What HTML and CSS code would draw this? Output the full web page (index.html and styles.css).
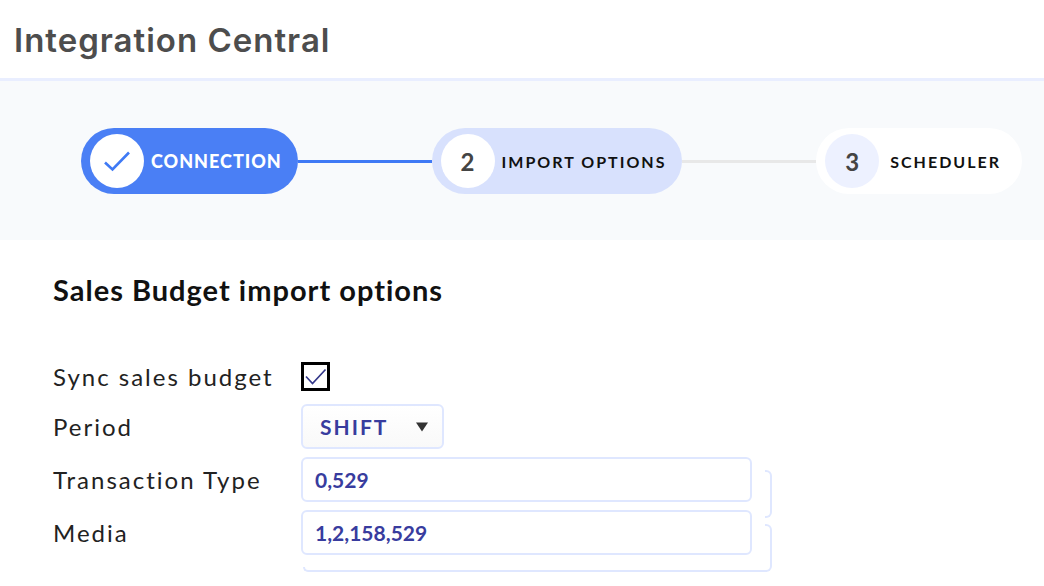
FILE: index.html
```html
<!DOCTYPE html>
<html lang="en">
<head>
<meta charset="utf-8">
<meta name="viewport" content="width=device-width, initial-scale=1">
<title>Integration Central</title>
<link rel="stylesheet" href="styles.css">
</head>
<body>
<header class="header">
  <h1 class="title">Integration Central</h1>
</header>
<nav class="stepper" aria-label="Progress">
  <div class="step step-done">
    <span class="badge">
      <svg width="28" height="22" viewBox="0 0 28 22" fill="none" stroke="currentColor" stroke-width="2.6" aria-hidden="true"><path d="M2 12.500L9.500 19.500L26 2.500"/></svg>
    </span>
    <span class="step-name">CONNECTION</span>
  </div>
  <span class="line line-done"></span>
  <div class="step step-current" aria-current="step">
    <span class="badge">2</span>
    <span class="step-name">IMPORT OPTIONS</span>
  </div>
  <span class="line"></span>
  <div class="step step-next">
    <span class="badge">3</span>
    <span class="step-name">SCHEDULER</span>
  </div>
</nav>
<main class="content">
  <h2 class="subtitle">Sales Budget import options</h2>
  <form class="form">
    <label class="label" for="sync">Sync sales budget</label>
    <span class="check">
      <input class="check-box" type="checkbox" id="sync" checked>
      <svg class="check-mark" width="22" height="18" viewBox="0 0 22 18" fill="none" stroke="currentColor" stroke-width="1.7" aria-hidden="true"><path d="M1 8.500L7.500 15.500L20.500 1.500"/></svg>
    </span>
    <label class="label" for="period">Period</label>
    <span class="select">
      <select class="select-box" id="period"><option>SHIFT</option></select>
      <svg class="arrow" width="12" height="10" viewBox="0 0 12 10" fill="currentColor" aria-hidden="true"><path d="M0 0.500H12L6 9.500Z"/></svg>
    </span>
    <label class="label" for="type">Transaction Type</label>
    <span class="field field-upper"><input class="text-box" type="text" id="type" value="0,529"></span>
    <label class="label" for="media">Media</label>
    <span class="field field-lower"><input class="text-box" type="text" id="media" value="1,2,158,529"></span>
  </form>
</main>
</body>
</html>
```

FILE: styles.css
```css
*,
*::before,
*::after {
  box-sizing: border-box;
}

body {
  margin: 0;
  background: #fff;
  color: #111;
  font-family: Lato, "Liberation Sans", sans-serif;
}

.header {
  padding: 20px 14px 18px;
  border-bottom: 3px solid #e9eeff;
}

.title {
  margin: 0;
  color: #4d4d4d;
  font: 600 33px/40px Inter, "Liberation Sans", sans-serif;
  letter-spacing: 1px;
}

.stepper {
  display: flex;
  align-items: center;
  padding: 47px 22px 46px 81px;
  background: #f8fafc;
}

.step {
  display: flex;
  align-items: center;
  gap: 7px;
  padding: 6px 16px 6px 9px;
  border-radius: 33px;
  font-size: 16px;
  font-weight: 700;
  letter-spacing: 2px;
  white-space: nowrap;
}

.badge {
  display: flex;
  align-items: center;
  justify-content: center;
  width: 54px;
  height: 54px;
  border-radius: 50%;
  background: #fff;
  color: #444;
  font-size: 24px;
  letter-spacing: 0;
}

.step-done {
  background: #4a7ff5;
  color: #fff;
  font-size: 18px;
  font-weight: 900;
  letter-spacing: 1px;
}

.step-done .badge {
  color: #3f7af5;
}

.step-current {
  background: #d8e1fd;
}

.step-next {
  gap: 11px;
  padding-right: 21px;
  background: #fff;
}

.step-next .badge {
  background: #edf1ff;
}

.line {
  flex: 1;
  height: 3px;
  background: #e8e8e8;
}

.line-done {
  background: #3f79f5;
}

.content {
  padding: 32px 53px;
}

.subtitle {
  margin: 0 0 49px;
  font-size: 29px;
  line-height: 36px;
  font-weight: 700;
  letter-spacing: 1px;
}

.form {
  display: grid;
  grid-template-columns: 240px minmax(0, 451px);
  grid-template-rows: 39px;
  grid-auto-rows: 45px;
  align-items: center;
  gap: 8px;
}

.label {
  color: #222;
  font-size: 24px;
  line-height: 30px;
  letter-spacing: 2px;
}

.check {
  display: grid;
  place-items: center;
  justify-self: start;
}

.check-box {
  grid-area: 1 / 1;
  width: 29px;
  height: 29px;
  margin: 0;
  border: 3px solid #000;
  background: #fff;
  appearance: none;
}

.check-mark {
  grid-area: 1 / 1;
  color: #34388a;
  pointer-events: none;
}

.select {
  display: grid;
  align-items: center;
  justify-self: start;
}

.select-box,
.text-box {
  height: 45px;
  border: 2px solid #dfe7ff;
  border-radius: 6px;
  background: #fff;
  color: #383c9e;
  font: 700 21px/28px Lato, "Liberation Sans", sans-serif;
}

.select-box {
  grid-area: 1 / 1;
  width: 143px;
  padding: 0 17px;
  background: linear-gradient(#fff, #f9f9f9);
  letter-spacing: 2px;
  appearance: none;
}

.arrow {
  grid-area: 1 / 1;
  justify-self: end;
  margin-right: 16px;
  color: #333;
  pointer-events: none;
}

.field {
  position: relative;
}

.text-box {
  display: block;
  width: 100%;
  padding: 0 12px;
}

/* Edges of the panels stacked behind the two text fields */
.field::after,
.field-lower::before {
  content: "";
  position: absolute;
  border: 2px solid #dfe7ff;
  pointer-events: none;
}

.field::after {
  top: 13px;
  right: -20px;
  width: 7px;
  height: 48px;
  border-left: 0;
  border-radius: 0 6px 6px 0;
}

.field-lower::after {
  top: 14px;
}

.field-lower::before {
  top: 57px;
  left: 2px;
  right: -15px;
  height: 5px;
  border-width: 0 0 2px 2px;
  border-radius: 0 0 0 5px;
}
```
